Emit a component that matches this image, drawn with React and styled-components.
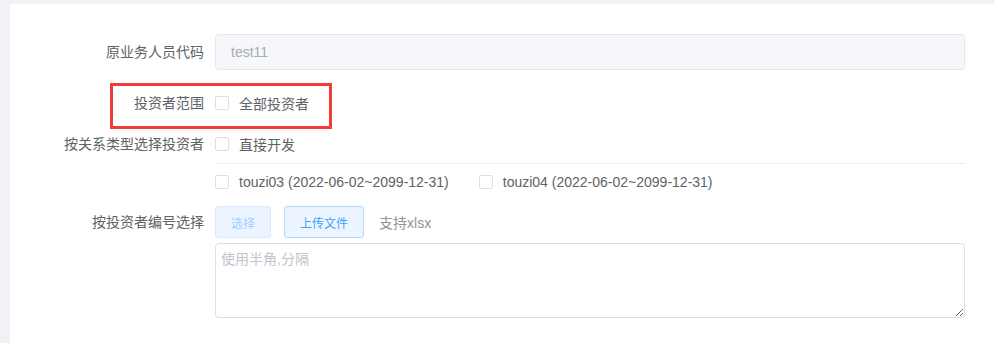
import React from 'react'
import styled, { createGlobalStyle } from 'styled-components'

const GlobalStyle = createGlobalStyle`
  html, body {
    margin: 0;
    padding: 0;
    background: #f0f2f5;
    font-family: "Liberation Sans", "Noto Sans CJK SC", sans-serif;
    font-size: 14px;
    color: #606266;
  }
`;

const Page = styled.div`
  padding: 4px 0 0 10px;
  height: 343px;
  box-sizing: border-box;
`;

const Panel = styled.div`
  position: relative;
  background: #fff;
  height: 100%;
  padding: 30px 30px 0 0;
  box-sizing: border-box;
`;

const Row = styled.div`
  display: flex;
  align-items: flex-start;
  margin-top: ${p => p.gap || 0}px;
`;

const Label = styled.div`
  width: 205px;
  flex: none;
  box-sizing: border-box;
  padding-right: 11px;
  text-align: right;
  line-height: ${p => p.h || 36}px;
  color: #606266;
  white-space: nowrap;
`;

const Content = styled.div`
  flex: 1;
  min-width: 0;
`;

const Input = styled.input`
  width: 100%;
  height: 36px;
  box-sizing: border-box;
  border: 1px solid #e4e7ed;
  border-radius: 4px;
  background: #f5f7fa;
  color: #a8abb2;
  padding: 0 15px;
  font: inherit;
  outline: none;
`;

const Line = styled.div`
  display: flex;
  align-items: center;
  height: ${p => p.h || 36}px;
`;

const Check = styled.label`
  display: inline-flex;
  align-items: center;
  margin-right: 30px;
  color: #606266;
  cursor: pointer;
  white-space: nowrap;
`;

const Box = styled.span`
  width: 14px;
  height: 14px;
  box-sizing: border-box;
  border: 1px solid #dcdfe6;
  border-radius: 2px;
  background: #fff;
  margin-right: 10px;
`;

const Divider = styled.div`
  height: 1px;
  background: #ebeef5;
  margin-top: 1px;
`;

const Toolbar = styled.div`
  display: flex;
  align-items: center;
  height: 32px;
`;

const Button = styled.button`
  height: 32px;
  padding: 0 15px;
  border-radius: 3px;
  font: inherit;
  font-size: 12px;
  margin-right: 13px;
  border: 1px solid ${p => (p.disabled ? '#d9ecff' : '#b3d8ff')};
  background: #ecf5ff;
  color: ${p => (p.disabled ? '#a0cfff' : '#409eff')};
  cursor: ${p => (p.disabled ? 'not-allowed' : 'pointer')};
`;

const Hint = styled.span`
  margin-left: 2px;
  color: #909399;
`;

const TextArea = styled.textarea`
  display: block;
  width: 100%;
  height: 75px;
  margin-top: 5px;
  box-sizing: border-box;
  border: 1px solid #dcdfe6;
  border-radius: 4px;
  padding: 5px 5px;
  font: inherit;
  line-height: 1.5;
  color: #606266;
  resize: vertical;
  outline: none;

  &::placeholder {
    color: #c0c4cc;
  }
`;

const Highlight = styled.div`
  position: absolute;
  left: 100px;
  top: 79px;
  width: 222px;
  height: 46px;
  box-sizing: border-box;
  border: 3px solid #f23a3a;
  pointer-events: none;
`;

const CheckItem = ({ children }) => (
  <Check>
    <Box />
    {children}
  </Check>
);

export default function App() {
  return (
    <>
      <GlobalStyle />
      <Page>
        <Panel>
          <Row>
            <Label>原业务人员代码</Label>
            <Content>
              <Input disabled value="test11" readOnly />
            </Content>
          </Row>

          <Row gap={15}>
            <Label>投资者范围</Label>
            <Content>
              <Line>
                <CheckItem>全部投资者</CheckItem>
              </Line>
            </Content>
          </Row>

          <Row gap={5}>
            <Label>按关系类型选择投资者</Label>
            <Content>
              <Line>
                <CheckItem>直接开发</CheckItem>
              </Line>
              <Divider />
              <Line h={35}>
                <CheckItem>touzi03 (2022-06-02~2099-12-31)</CheckItem>
                <CheckItem>touzi04 (2022-06-02~2099-12-31)</CheckItem>
              </Line>
            </Content>
          </Row>

          <Row gap={7}>
            <Label h={32}>按投资者编号选择</Label>
            <Content>
              <Toolbar>
                <Button disabled>选择</Button>
                <Button>上传文件</Button>
                <Hint>支持xlsx</Hint>
              </Toolbar>
              <TextArea placeholder="使用半角,分隔" />
            </Content>
          </Row>

          <Highlight />
        </Panel>
      </Page>
    </>
  );
}
